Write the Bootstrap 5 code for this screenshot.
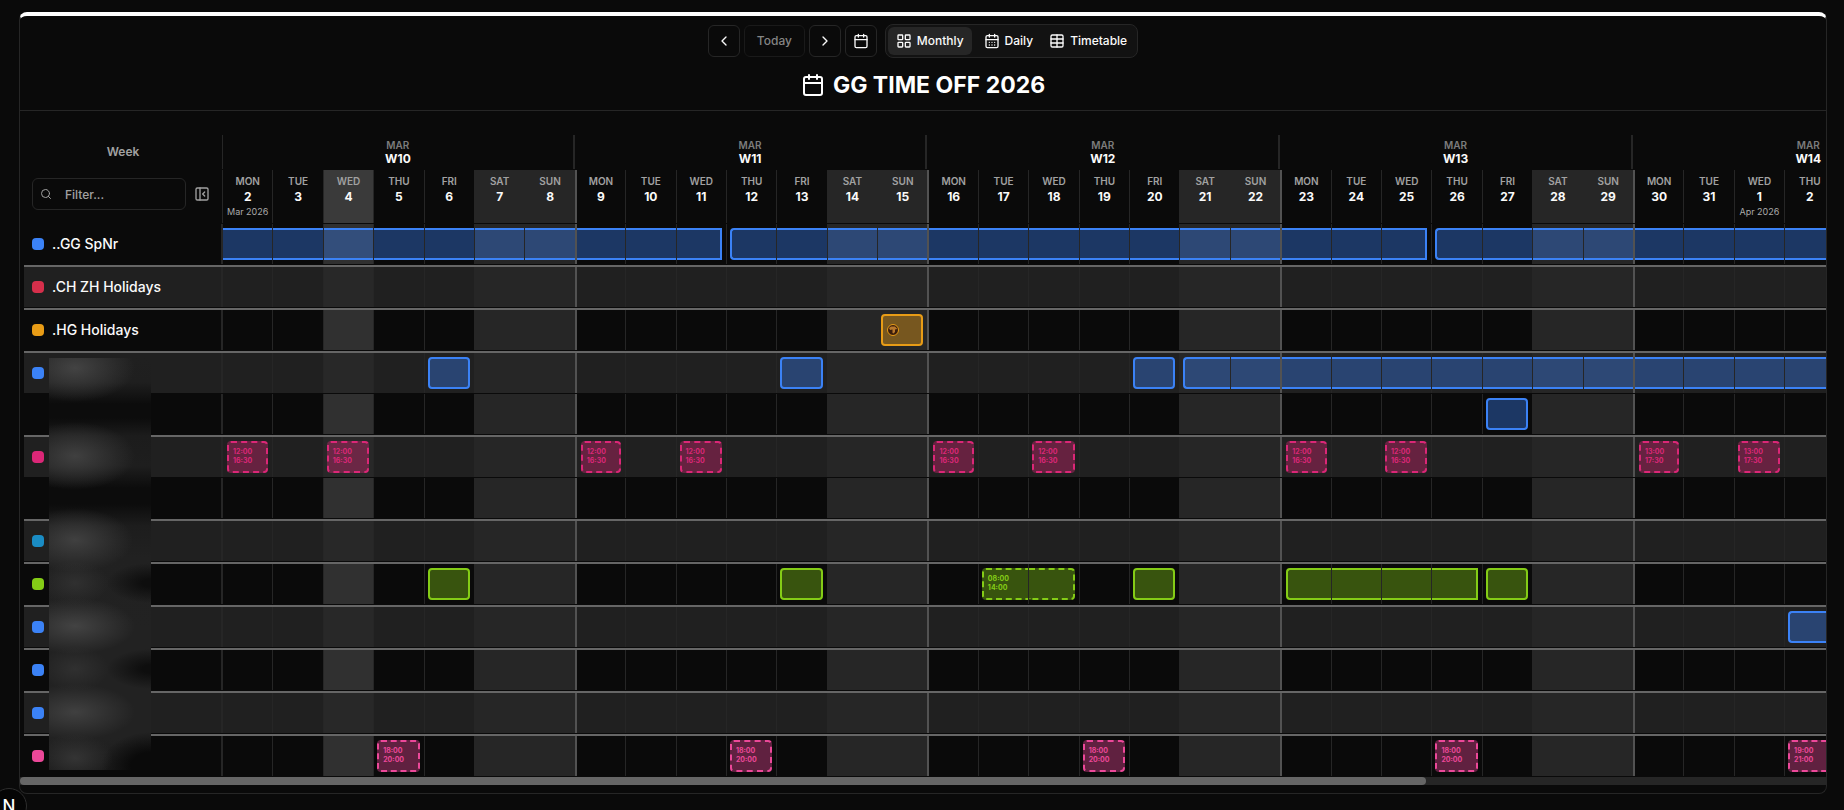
<!DOCTYPE html>
<html lang="en" data-bs-theme="dark">
<head>
<meta charset="utf-8">
<meta name="viewport" content="width=device-width, initial-scale=1">
<title>GG TIME OFF 2026</title>
<link href="https://cdn.jsdelivr.net/npm/bootstrap@5.3.0/dist/css/bootstrap.min.css" rel="stylesheet">
<style>
:root{--ink:#0a0a0a;--line:#262626;--muted:#a1a1a1}
body{background:var(--ink);color:#fafafa;font-family:Inter,"Liberation Sans",sans-serif;font-size:12px;font-weight:500;line-height:16px;overflow-x:hidden}
.page-wrap{padding:12px 17px 16px 19px}
.planner{border:1px solid var(--line);border-top:4px solid #fff;border-radius:8px;background:var(--ink);overflow:hidden}
.planner-head{padding:8px 8px 7px;border-bottom:1px solid var(--line);gap:9px}
.tool{height:32px;min-width:32px;padding:0;border:1px solid var(--line);border-radius:6px;background:var(--ink);color:#fafafa;font-size:12px;font-weight:500;line-height:16px;display:flex;align-items:center;justify-content:center}
.tool-today{width:61px;border-color:#1a1a1a;color:#858585}
.switcher{height:34px;padding:2px;margin-left:4px;border:1px solid var(--line);border-radius:8px;background:#121212}
.switcher button{height:28px;padding:0 8px;border:0;border-radius:6px;background:transparent;color:#fafafa;font-size:12px;font-weight:500;display:flex;align-items:center;gap:5px}
.switcher button.active{background:#262626}
.planner-title{font-size:23px;font-weight:700;line-height:36px;margin:0}
svg.ico{fill:none;stroke:currentColor;stroke-width:2;stroke-linecap:round;stroke-linejoin:round;flex:none}
.scroller{padding-top:24px;overflow-x:auto;scrollbar-width:none}
.scroller::-webkit-scrollbar{display:none}
.sheet{width:2319px;padding-left:4px;position:relative}
.plan{table-layout:fixed;width:100%;border-collapse:separate;border-spacing:0}
.plan th,.plan td{padding:0 0 1px;vertical-align:top;font-weight:inherit}
.plan col.side{width:198px}
.wk{height:34px;padding-top:4px;text-align:center;border-right:2px solid var(--line);font-weight:700;line-height:16px}
.wk small{display:block;font-size:10px;line-height:12px;font-weight:600;color:#7c7c7c}
.wk-first{border-left:1px solid var(--line)}
.side-week{height:34px;line-height:34px;text-align:center;color:var(--muted);font-weight:600;padding-right:0}
.side-tools{height:53px;padding:8px 12px 0 8px}
.finder{position:relative;width:154px}
.finder svg{position:absolute;left:8px;top:10px;color:var(--muted)}
.finder input{height:32px;width:100%;padding:0 8px 0 32px;border:1px solid var(--line);border-radius:6px;background:transparent;color:#fafafa;font-size:12px;font-weight:500}
.finder input::placeholder{color:var(--muted);opacity:1}
.bare{border:0;background:none;color:var(--muted);padding:0;display:flex}
.day{height:53px;padding-top:5px;text-align:center;border-left:1px solid var(--line);font-weight:700;line-height:18px;white-space:nowrap}
.day b{display:block;font-size:10px;font-weight:600;line-height:13px;color:var(--muted)}
.day i{display:block;font-style:normal;font-size:9px;font-weight:400;line-height:12px;color:#ababab}
.slot{height:40px;border-left:1px solid var(--line);display:flex;padding:4px 0}
.off{background:#262626}
.day.mon,.slot.mon{border-left:2px solid #525252}
.day.now{background:#3a3a3a}
.odd .slot,.odd .person{background:#202020}
.slot.now{background:#303030}
.odd .slot.now{background:#282828}
tr .slot.off{background:#262626}
.person{height:40px;border-right:1px solid var(--line);padding-left:8px;gap:8px;font-size:14px;line-height:20px;display:flex;align-items:center}
.odd .person{border-right-color:#262626}
.dot{width:12px;height:12px;border-radius:4px;background:var(--c)}
.last td,.last th{border-bottom:2px solid #666}
.ev{flex:1;min-width:0;height:32px;border:2px solid var(--c);border-left-width:0;border-right-width:0;background:color-mix(in srgb,var(--c) var(--a,38%),transparent);color:var(--c);font-size:7px;font-weight:700;line-height:9px;padding-top:4px}
.ev.s{margin-left:3px;border-left-width:2px;border-top-left-radius:4px;border-bottom-left-radius:4px;padding-left:4px}
.mon .ev.s,.first .ev.s{margin-left:4px}
.ev.e{margin-right:4px;border-right-width:2px}
.ev.r{border-top-right-radius:4px;border-bottom-right-radius:4px}
.ev.dash{border-style:dashed;border-color:var(--c)}
.ev svg{display:block;margin-top:4px}
.veil{position:absolute;left:29px;top:223px;width:102px;height:412px;
background:
radial-gradient(ellipse 60px 34px at 26px 10px,#434343,#43434300),
radial-gradient(ellipse 60px 34px at 26px 98px,#404040,#40404000),
radial-gradient(ellipse 58px 32px at 26px 182px,#404040,#40404000),
radial-gradient(ellipse 34px 22px at 26px 225px,#303030,#30303000),
radial-gradient(ellipse 60px 28px at 26px 268px,#434343,#43434300),
radial-gradient(ellipse 34px 22px at 26px 311px,#303030,#30303000),
radial-gradient(ellipse 60px 28px at 26px 354px,#404040,#40404000),
radial-gradient(ellipse 38px 24px at 26px 400px,#343434,#34343400),
radial-gradient(ellipse 44px 20px at 102px 225px,#0e0e0e 20%,#0e0e0e00),
radial-gradient(ellipse 44px 20px at 102px 311px,#0e0e0e 20%,#0e0e0e00),
radial-gradient(ellipse 50px 34px at 102px 408px,#0a0a0a 40%,#0a0a0a00),
linear-gradient(#202020 0,#1f1f1f 24px,#0c0c0c 46px,#0c0c0c 60px,#1c1c1c 78px,#1e1e1e 108px,#0c0c0c 130px,#0c0c0c 146px,#1d1d1d 168px,#212121 200px,#222 270px,#222 380px,#1c1c1c 412px)}
.track{height:8px;background:#262626;margin-bottom:8px}
.thumb{height:8px;width:78%;border-radius:4px;background:#666}
.dev-badge{position:fixed;left:-9px;bottom:-14px;width:36px;height:36px;border:1px solid #2e2e2e;border-radius:50%;background:#050505;color:#fff;font-size:17px;line-height:34px;display:flex;align-items:center;justify-content:center}
</style>
</head>
<body>
<main class="page-wrap">
<section class="planner">
<header class="planner-head d-flex flex-column align-items-center">
  <div class="d-flex align-items-center gap-1">
    <button class="tool" type="button" aria-label="Previous"><svg class="ico" width="16" height="16" viewBox="0 0 24 24"><path d="m15 18-6-6 6-6"/></svg></button>
    <button class="tool tool-today" type="button">Today</button>
    <button class="tool" type="button" aria-label="Next"><svg class="ico" width="16" height="16" viewBox="0 0 24 24"><path d="m9 18 6-6-6-6"/></svg></button>
    <button class="tool" type="button" aria-label="Pick a date"><svg class="ico" width="16" height="16" viewBox="0 0 24 24"><path d="M8 2v4M16 2v4M3 10h18"/><rect x="3" y="4" width="18" height="18" rx="2"/></svg></button>
    <div class="switcher d-flex">
      <button class="active" type="button"><svg class="ico" width="16" height="16" viewBox="0 0 24 24"><rect x="3" y="3" width="7" height="7" rx="1"/><rect x="14" y="3" width="7" height="7" rx="1"/><rect x="14" y="14" width="7" height="7" rx="1"/><rect x="3" y="14" width="7" height="7" rx="1"/></svg>Monthly</button>
      <button type="button" class="ms-1"><svg class="ico" width="16" height="16" viewBox="0 0 24 24"><path d="M8 2v4M16 2v4M3 10h18M8 14h.01M12 14h.01M16 14h.01M8 18h.01M12 18h.01M16 18h.01"/><rect x="3" y="4" width="18" height="18" rx="2"/></svg>Daily</button>
      <button type="button" class="px-2"><svg class="ico" width="16" height="16" viewBox="0 0 24 24"><rect x="3" y="3" width="18" height="18" rx="2"/><path d="M12 3v18M3 9h18M3 15h18"/></svg>Timetable</button>
    </div>
  </div>
  <h1 class="planner-title d-flex align-items-center gap-2"><svg class="ico" width="24" height="24" viewBox="0 0 24 24"><path d="M8 2v4M16 2v4M3 10h18"/><rect x="3" y="4" width="18" height="18" rx="2"/></svg>GG TIME OFF 2026</h1>
</header>
<div class="scroller" id="scroller">
  <div class="sheet">
    <table class="plan" id="plan"></table>
    <div class="veil"></div>
  </div>
</div>
<div class="track"><div class="thumb" id="thumb"></div></div>
</section>
</main>
<div class="dev-badge">N</div>
<script>
const DAYS = 42, TODAY = 2;
const names = ['MON','TUE','WED','THU','FRI','SAT','SUN'];
const coin = '<svg width="12" height="12" viewBox="0 0 12 12"><circle cx="6" cy="6" r="5.500" fill="#3a1d0c" stroke="#e89c16"/><path d="M2 4 4 2.500h4L10.300 5 8 5.500V8L6.500 9.500 5.500 9V5.500L3 6z" fill="#b9782c"/></svg>';
const BLUE = '#3b82f6', LIME = '#84cc16', PINK = '#db2777', ROSE = '#ec4899';
const shift = (d, a, b) => [d, d, `${a}<br>${b}`, 'dash'];
// Each person has lanes; an event is [first day, last day, label, style].
const people = [
  {n:'..GG SpNr', c:BLUE, lanes:[[[-1,9],[10,23],[24,50]]]},
  {n:'.CH ZH Holidays', c:'#d62f4b', lanes:[[]]},
  {n:'.HG Holidays', c:'#e89c16', a:'42%', lanes:[[[13,13,coin]]]},
  {n:'', c:BLUE, lanes:[[[4,4],[11,11],[18,18],[19,50]],[[25,25]]]},
  {n:'', c:PINK, lanes:[[0,2,7,9,14,16,21,23].map(d=>shift(d,'12:00','16:30')).concat([28,30].map(d=>shift(d,'13:00','17:30'))),[]]},
  {n:'', c:'#1a8cc4', lanes:[[]]},
  {n:'', c:LIME, lanes:[[[4,4],[11,11],[15,16,'08:00<br>14:00','dash'],[18,18],[21,24],[25,25]]]},
  {n:'', c:BLUE, lanes:[[[31,33]]]},
  {n:'', c:BLUE, lanes:[[]]},
  {n:'', c:BLUE, lanes:[[]]},
  {n:'', c:ROSE, lanes:[[3,10,17,24].map(d=>shift(d,'18:00','20:00')).concat([shift(31,'19:00','21:00')])]}
];
const kind = d => (d % 7 > 4 ? ' off' : '') + (d === TODAY ? ' now' : '') + (d === 0 ? ' first' : d % 7 === 0 ? ' mon' : '');

let html = '<colgroup><col class="side">' + '<col>'.repeat(DAYS) + '</colgroup><thead><tr><th><div class="side-week">Week</div></th>';
for (let w = 0; w < DAYS / 7; w++)
  html += `<th colspan="7"><div class="wk${w ? '' : ' wk-first'}"><small>${w < 5 ? 'MAR' : 'APR'}</small>W${10 + w}</div></th>`;
html += `</tr><tr><th><div class="side-tools d-flex align-items-start justify-content-between">
  <div class="finder"><svg class="ico" width="12" height="12" viewBox="0 0 24 24"><circle cx="11" cy="11" r="8"/><path d="m21 21-4.300-4.300"/></svg><input type="text" placeholder="Filter..." aria-label="Filter"></div>
  <button class="bare mt-2" type="button" aria-label="Collapse panel"><svg class="ico" width="16" height="16" viewBox="0 0 24 24"><rect x="3" y="3" width="18" height="18" rx="2"/><path d="M9 3v18M16 15l-3-3 3-3"/></svg></button></div></th>`;
for (let d = 0; d < DAYS; d++) {
  const n = d < 30 ? d + 2 : d - 29;
  const m = d === 0 ? '<i>Mar 2026</i>' : d === 30 ? '<i>Apr 2026</i>' : '';
  html += `<th><div class="day${kind(d)}"><b>${names[d % 7]}</b>${n}${m}</div></th>`;
}
html += '</tr></thead><tbody>';
let row = 0;
people.forEach((p, pi) => p.lanes.forEach((lane, li) => {
  const last = li === p.lanes.length - 1 && pi < people.length - 1;
  html += `<tr class="${row++ % 2 ? 'odd' : ''}${last ? ' last' : ''}" style="--c:${p.c};--a:${p.a || '38%'}"><th><div class="person">${li ? '' : `<span class="dot"></span>${p.n}`}</div></th>`;
  for (let d = 0; d < DAYS; d++) {
    const e = lane.find(x => x[0] <= d && d <= x[1]);
    let bar = '';
    if (e) {
      const s = d === e[0], t = d === e[1];
      bar = `<div class="ev${s ? ' s' : ''}${t ? ' e' : ''}${t && (s || e[3]) ? ' r' : ''} ${e[3] || ''}">${s && e[2] || ''}</div>`;
    }
    html += `<td><div class="slot${kind(d)}">${bar}</div></td>`;
  }
  html += '</tr>';
}));
document.getElementById('plan').innerHTML = html + '</tbody>';

const sc = document.getElementById('scroller'), thumb = document.getElementById('thumb');
const sync = () => {
  thumb.style.width = sc.clientWidth / sc.scrollWidth * 100 + '%';
  thumb.style.marginLeft = sc.scrollLeft / sc.scrollWidth * 100 + '%';
};
sc.addEventListener('scroll', sync);
addEventListener('resize', sync);
sync();
</script>
<script src="https://cdn.jsdelivr.net/npm/bootstrap@5.3.0/dist/js/bootstrap.bundle.min.js"></script>
</body>
</html>
